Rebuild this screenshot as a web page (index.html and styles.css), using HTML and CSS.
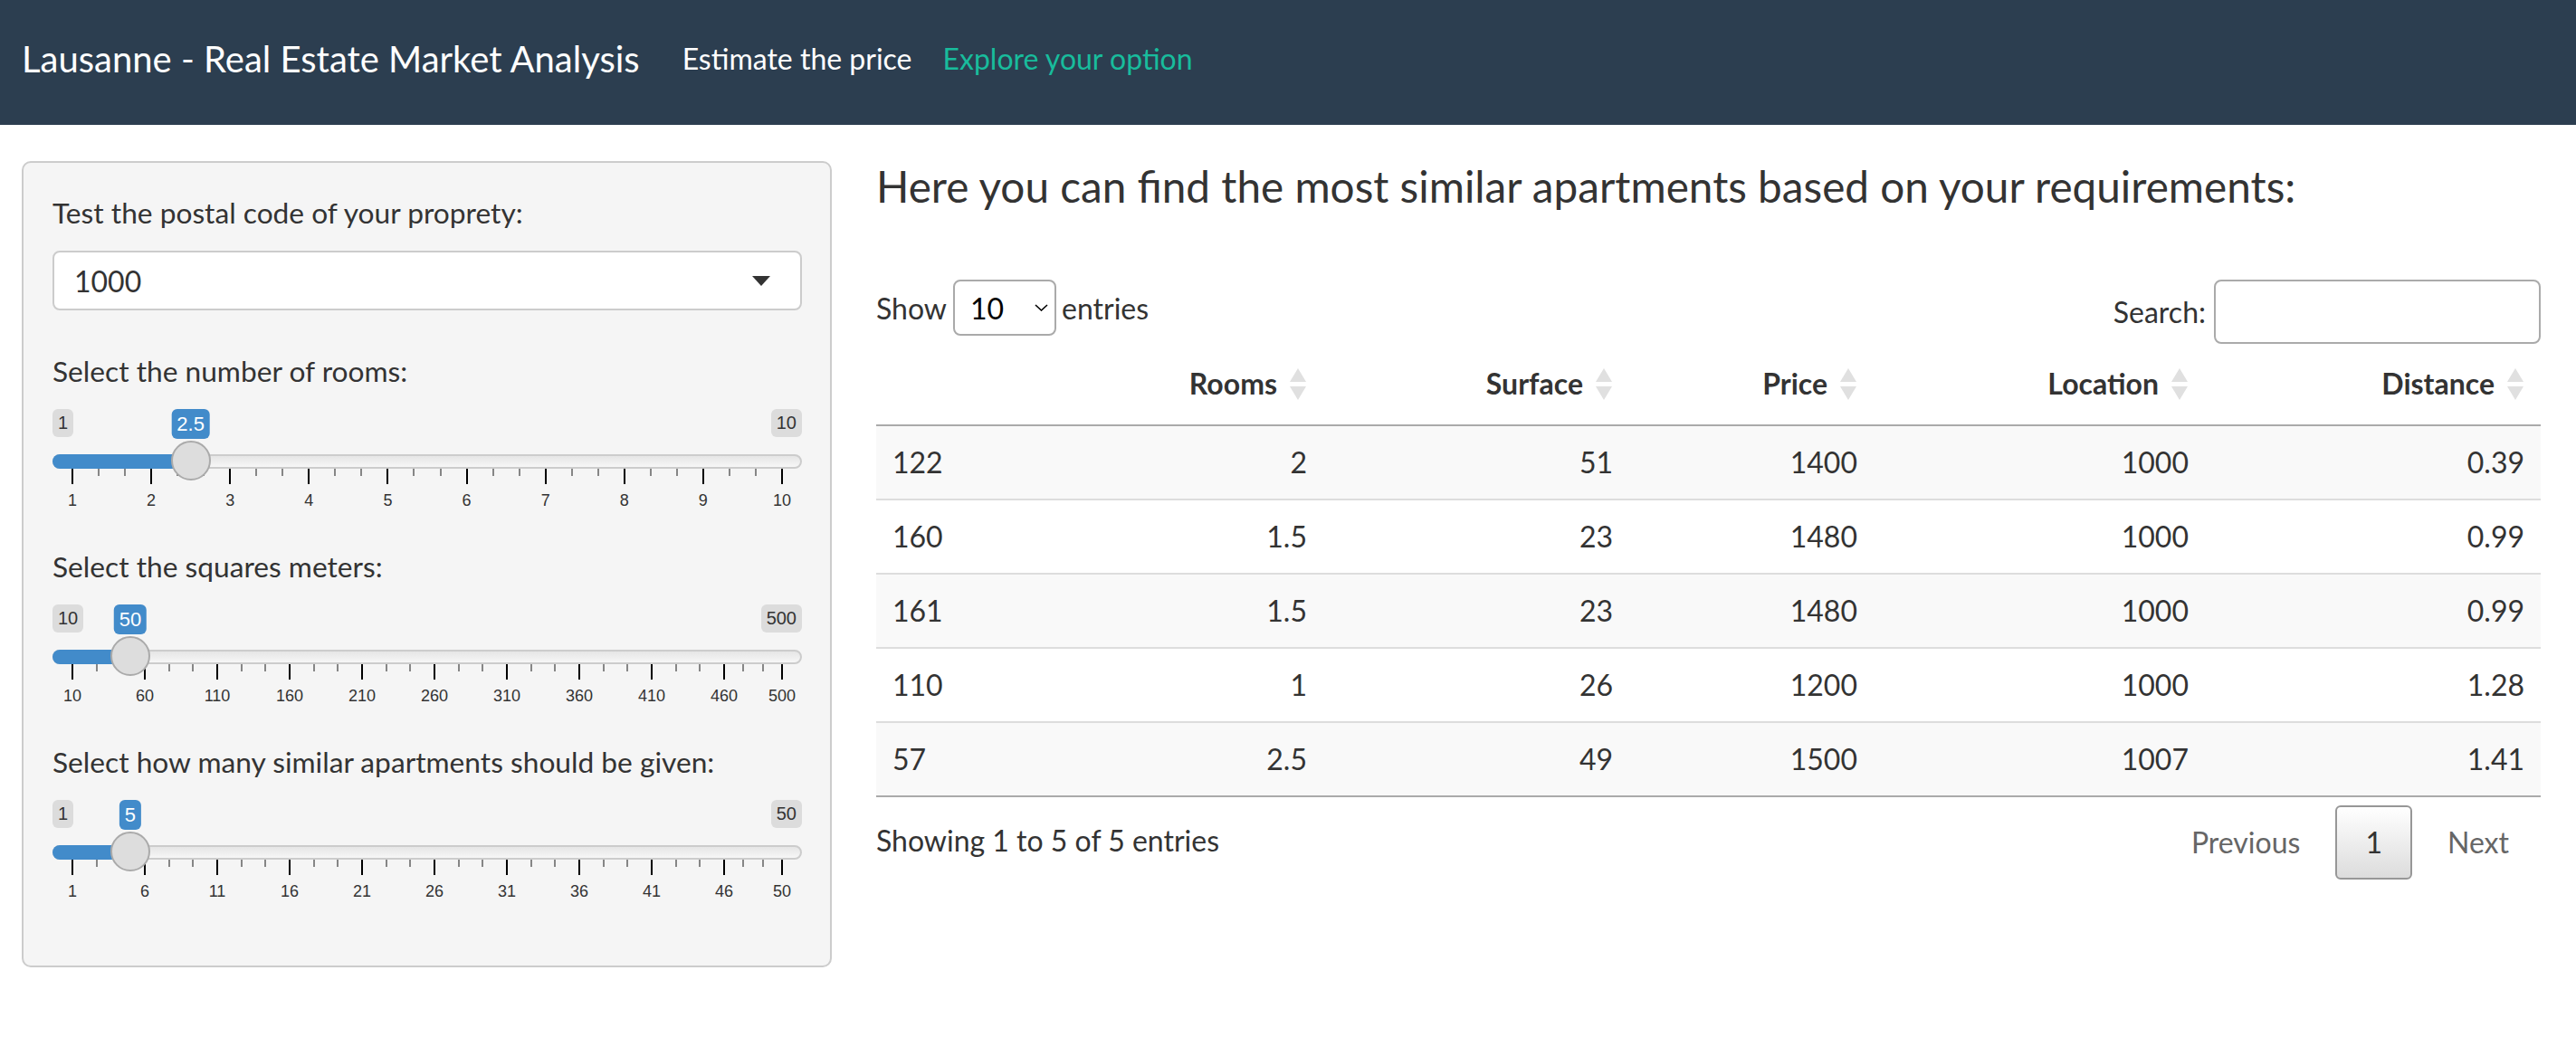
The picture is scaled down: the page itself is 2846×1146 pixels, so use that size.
FILE: index.html
```html
<!DOCTYPE html>
<html lang="en">
<head>
<meta charset="utf-8">
<title>Lausanne - Real Estate Market Analysis</title>
<link rel="stylesheet" href="styles.css">
</head>
<body>
<nav class="navbar">
  <span class="brand">Lausanne - Real Estate Market Analysis</span>
  <ul class="nav">
    <li>Estimate the price</li>
    <li class="active">Explore your option</li>
  </ul>
</nav>
<div class="page">
  <aside class="well">
    <label class="lbl">Test the postal code of your proprety:</label>
    <div class="selectize"><span>1000</span><span class="caret"></span></div>

    <label class="lbl">Select the number of rooms:</label>
    <div class="irs">
      <span class="irs-line"></span>
      <span class="irs-min">1</span>
      <span class="irs-max">10</span>
      <div class="irs-scale">
        <span class="pol" style="left:0%"></span>
        <span class="pol small" style="left:3.704%"></span>
        <span class="pol small" style="left:7.407%"></span>
        <span class="pol" style="left:11.111%"></span>
        <span class="pol small" style="left:14.815%"></span>
        <span class="pol small" style="left:18.519%"></span>
        <span class="pol" style="left:22.222%"></span>
        <span class="pol small" style="left:25.926%"></span>
        <span class="pol small" style="left:29.630%"></span>
        <span class="pol" style="left:33.333%"></span>
        <span class="pol small" style="left:37.037%"></span>
        <span class="pol small" style="left:40.741%"></span>
        <span class="pol" style="left:44.444%"></span>
        <span class="pol small" style="left:48.148%"></span>
        <span class="pol small" style="left:51.852%"></span>
        <span class="pol" style="left:55.556%"></span>
        <span class="pol small" style="left:59.259%"></span>
        <span class="pol small" style="left:62.963%"></span>
        <span class="pol" style="left:66.667%"></span>
        <span class="pol small" style="left:70.370%"></span>
        <span class="pol small" style="left:74.074%"></span>
        <span class="pol" style="left:77.778%"></span>
        <span class="pol small" style="left:81.481%"></span>
        <span class="pol small" style="left:85.185%"></span>
        <span class="pol" style="left:88.889%"></span>
        <span class="pol small" style="left:92.593%"></span>
        <span class="pol small" style="left:96.296%"></span>
        <span class="pol" style="left:100%"></span>
        <span class="gt" style="left:0%">1</span>
        <span class="gt" style="left:11.111%">2</span>
        <span class="gt" style="left:22.222%">3</span>
        <span class="gt" style="left:33.333%">4</span>
        <span class="gt" style="left:44.444%">5</span>
        <span class="gt" style="left:55.556%">6</span>
        <span class="gt" style="left:66.667%">7</span>
        <span class="gt" style="left:77.778%">8</span>
        <span class="gt" style="left:88.889%">9</span>
        <span class="gt" style="left:100%">10</span>
        <span class="irs-bar" style="width:calc(16.667% + 22px)"></span>
        <span class="irs-slider" style="left:16.667%"></span>
        <span class="irs-single" style="left:16.667%">2.5</span>
      </div>
    </div>

    <label class="lbl">Select the squares meters:</label>
    <div class="irs">
      <span class="irs-line"></span>
      <span class="irs-min">10</span>
      <span class="irs-max">500</span>
      <div class="irs-scale">
        <span class="pol" style="left:0%"></span>
        <span class="pol small" style="left:3.401%"></span>
        <span class="pol small" style="left:6.803%"></span>
        <span class="pol" style="left:10.204%"></span>
        <span class="pol small" style="left:13.605%"></span>
        <span class="pol small" style="left:17.007%"></span>
        <span class="pol" style="left:20.408%"></span>
        <span class="pol small" style="left:23.810%"></span>
        <span class="pol small" style="left:27.211%"></span>
        <span class="pol" style="left:30.612%"></span>
        <span class="pol small" style="left:34.014%"></span>
        <span class="pol small" style="left:37.415%"></span>
        <span class="pol" style="left:40.816%"></span>
        <span class="pol small" style="left:44.218%"></span>
        <span class="pol small" style="left:47.619%"></span>
        <span class="pol" style="left:51.020%"></span>
        <span class="pol small" style="left:54.422%"></span>
        <span class="pol small" style="left:57.823%"></span>
        <span class="pol" style="left:61.224%"></span>
        <span class="pol small" style="left:64.626%"></span>
        <span class="pol small" style="left:68.027%"></span>
        <span class="pol" style="left:71.429%"></span>
        <span class="pol small" style="left:74.830%"></span>
        <span class="pol small" style="left:78.231%"></span>
        <span class="pol" style="left:81.633%"></span>
        <span class="pol small" style="left:85.034%"></span>
        <span class="pol small" style="left:88.435%"></span>
        <span class="pol" style="left:91.837%"></span>
        <span class="pol small" style="left:94.558%"></span>
        <span class="pol small" style="left:97.279%"></span>
        <span class="pol" style="left:100%"></span>
        <span class="gt" style="left:0%">10</span>
        <span class="gt" style="left:10.204%">60</span>
        <span class="gt" style="left:20.408%">110</span>
        <span class="gt" style="left:30.612%">160</span>
        <span class="gt" style="left:40.816%">210</span>
        <span class="gt" style="left:51.020%">260</span>
        <span class="gt" style="left:61.224%">310</span>
        <span class="gt" style="left:71.429%">360</span>
        <span class="gt" style="left:81.633%">410</span>
        <span class="gt" style="left:91.837%">460</span>
        <span class="gt" style="left:100%">500</span>
        <span class="irs-bar" style="width:calc(8.163% + 22px)"></span>
        <span class="irs-slider" style="left:8.163%"></span>
        <span class="irs-single" style="left:8.163%">50</span>
      </div>
    </div>

    <label class="lbl">Select how many similar apartments should be given:</label>
    <div class="irs">
      <span class="irs-line"></span>
      <span class="irs-min">1</span>
      <span class="irs-max">50</span>
      <div class="irs-scale">
        <span class="pol" style="left:0%"></span>
        <span class="pol small" style="left:3.401%"></span>
        <span class="pol small" style="left:6.803%"></span>
        <span class="pol" style="left:10.204%"></span>
        <span class="pol small" style="left:13.605%"></span>
        <span class="pol small" style="left:17.007%"></span>
        <span class="pol" style="left:20.408%"></span>
        <span class="pol small" style="left:23.810%"></span>
        <span class="pol small" style="left:27.211%"></span>
        <span class="pol" style="left:30.612%"></span>
        <span class="pol small" style="left:34.014%"></span>
        <span class="pol small" style="left:37.415%"></span>
        <span class="pol" style="left:40.816%"></span>
        <span class="pol small" style="left:44.218%"></span>
        <span class="pol small" style="left:47.619%"></span>
        <span class="pol" style="left:51.020%"></span>
        <span class="pol small" style="left:54.422%"></span>
        <span class="pol small" style="left:57.823%"></span>
        <span class="pol" style="left:61.224%"></span>
        <span class="pol small" style="left:64.626%"></span>
        <span class="pol small" style="left:68.027%"></span>
        <span class="pol" style="left:71.429%"></span>
        <span class="pol small" style="left:74.830%"></span>
        <span class="pol small" style="left:78.231%"></span>
        <span class="pol" style="left:81.633%"></span>
        <span class="pol small" style="left:85.034%"></span>
        <span class="pol small" style="left:88.435%"></span>
        <span class="pol" style="left:91.837%"></span>
        <span class="pol small" style="left:94.558%"></span>
        <span class="pol small" style="left:97.279%"></span>
        <span class="pol" style="left:100%"></span>
        <span class="gt" style="left:0%">1</span>
        <span class="gt" style="left:10.204%">6</span>
        <span class="gt" style="left:20.408%">11</span>
        <span class="gt" style="left:30.612%">16</span>
        <span class="gt" style="left:40.816%">21</span>
        <span class="gt" style="left:51.020%">26</span>
        <span class="gt" style="left:61.224%">31</span>
        <span class="gt" style="left:71.429%">36</span>
        <span class="gt" style="left:81.633%">41</span>
        <span class="gt" style="left:91.837%">46</span>
        <span class="gt" style="left:100%">50</span>
        <span class="irs-bar" style="width:calc(8.163% + 22px)"></span>
        <span class="irs-slider" style="left:8.163%"></span>
        <span class="irs-single" style="left:8.163%">5</span>
      </div>
    </div>
  </aside>

  <main class="main">
    <h3 class="title">Here you can find the most similar apartments based on your requirements:</h3>
    <div class="dt-top">
      <div class="len">Show
        <div class="sel"><span>10</span>
          <svg class="chev" width="15" height="8" viewBox="0 0 15 8"><polyline points="1,1 7.5,7 14,1" fill="none" stroke="#000" stroke-width="1.6"/></svg>
        </div>entries</div>
      <div class="filt">Search:<div class="search"></div></div>
    </div>
    <table class="dt">
      <colgroup>
        <col style="width:182px"><col style="width:312px"><col style="width:338px"><col style="width:270px"><col style="width:366px"><col style="width:371px">
      </colgroup>
      <thead>
        <tr>
          <th></th>
          <th>Rooms<svg class="sort" width="18" height="35" viewBox="0 0 18 35"><polygon points="9,0 18,15 0,15"/><polygon points="0,20 18,20 9,35"/></svg></th>
          <th>Surface<svg class="sort" width="18" height="35" viewBox="0 0 18 35"><polygon points="9,0 18,15 0,15"/><polygon points="0,20 18,20 9,35"/></svg></th>
          <th>Price<svg class="sort" width="18" height="35" viewBox="0 0 18 35"><polygon points="9,0 18,15 0,15"/><polygon points="0,20 18,20 9,35"/></svg></th>
          <th>Location<svg class="sort" width="18" height="35" viewBox="0 0 18 35"><polygon points="9,0 18,15 0,15"/><polygon points="0,20 18,20 9,35"/></svg></th>
          <th>Distance<svg class="sort" width="18" height="35" viewBox="0 0 18 35"><polygon points="9,0 18,15 0,15"/><polygon points="0,20 18,20 9,35"/></svg></th>
        </tr>
      </thead>
      <tbody>
        <tr><td>122</td><td>2</td><td>51</td><td>1400</td><td>1000</td><td>0.39</td></tr>
        <tr><td>160</td><td>1.5</td><td>23</td><td>1480</td><td>1000</td><td>0.99</td></tr>
        <tr><td>161</td><td>1.5</td><td>23</td><td>1480</td><td>1000</td><td>0.99</td></tr>
        <tr><td>110</td><td>1</td><td>26</td><td>1200</td><td>1000</td><td>1.28</td></tr>
        <tr><td>57</td><td>2.5</td><td>49</td><td>1500</td><td>1007</td><td>1.41</td></tr>
      </tbody>
    </table>
    <div class="dt-bottom">
      <div class="info">Showing 1 to 5 of 5 entries</div>
      <div class="paginate">
        <span class="pb">Previous</span>
        <span class="pb current">1</span>
        <span class="pb">Next</span>
      </div>
    </div>
  </main>
</div>
</body>
</html>
```

FILE: styles.css
```css
* { box-sizing: border-box; }
body { margin: 0; font-family: Lato, "Noto Sans", sans-serif; color: #333; background: #fff; }

.navbar { height: 138px; background: #2c3e50; display: flex; align-items: center; padding: 0 0 9px 24px; }
.brand { font-size: 40px; line-height: 48px; color: #fff; margin-right: 30px; white-space: nowrap; }
.nav { display: flex; list-style: none; margin: 0; padding: 0; }
.nav li { font-size: 32px; line-height: 38px; color: #fff; padding: 0 17px; white-space: nowrap; }
.nav li.active { color: #18bc9c; }

.page { display: flex; align-items: flex-start; gap: 49px; padding: 40px 39px 0 24px; }

.well { flex: none; width: 895px; background: #f5f5f5; border: 2px solid #ccc; border-radius: 10px; padding: 36px 31px 28px 32px; }
.lbl { display: block; font-size: 31.7px; line-height: 38px; margin-bottom: 23px; white-space: nowrap; }
.selectize { height: 66px; background: #fff; border: 2px solid #ccc; border-radius: 8px; display: flex; align-items: center; justify-content: space-between; padding: 0 33px 0 22px; font-size: 32px; margin-bottom: 48px; }
.caret { width: 0; height: 0; border-left: 10px solid transparent; border-right: 10px solid transparent; border-top: 11px solid #333; }

.irs { position: relative; height: 155px; font-family: "Liberation Sans", Arial, sans-serif; }
.irs-line { position: absolute; left: 0; right: 0; top: 50px; height: 16px; border: 2px solid #ccc; border-radius: 16px; background: linear-gradient(to bottom, #ddd -50%, #fff 150%); }
.irs-min, .irs-max { position: absolute; top: 0; font-size: 20px; line-height: 27px; padding: 2px 6px; background: rgba(0, 0, 0, 0.1); border-radius: 6px; color: #333; }
.irs-min { left: 0; }
.irs-max { right: 0; }
.irs-scale { position: absolute; left: 22px; right: 22px; top: 0; bottom: 0; }
.irs-bar { position: absolute; left: -22px; top: 50px; height: 16px; background: #428bca; border-radius: 16px 0 0 16px; }
.irs-slider { position: absolute; top: 35px; width: 44px; height: 44px; margin-left: -22px; border: 2px solid #aaa; background: #ddd; border-radius: 50%; }
.irs-single { position: absolute; top: 0; transform: translateX(-50%); font-size: 22px; line-height: 29px; padding: 2px 6px; background: #428bca; color: #fff; border-radius: 6px; white-space: nowrap; }
.pol { position: absolute; top: 66px; width: 2px; height: 17px; margin-left: -1px; background: #000; }
.pol.small { height: 8px; background: rgba(0, 0, 0, 0.45); }
.gt { position: absolute; top: 91px; font-size: 18px; line-height: 20px; transform: translateX(-50%); color: #333; white-space: nowrap; }

.main { flex: 1; min-width: 0; }
.title { font-size: 47.7px; line-height: 51px; font-weight: 400; margin: 2px 0 0; white-space: nowrap; }

.dt-top { display: flex; justify-content: space-between; align-items: flex-start; margin-top: 78px; font-size: 32px; }
.len, .filt { display: flex; align-items: center; white-space: nowrap; }
.sel { width: 114px; height: 62px; border: 2px solid #aaa; border-radius: 8px; margin: 0 6px 0 7px; display: flex; align-items: center; justify-content: space-between; padding: 0 7px 0 17px; color: #000; background: #fff; }
.search { width: 361px; height: 71px; border: 2px solid #aaa; border-radius: 8px; margin-left: 9px; background: #fff; }

.dt { width: 100%; border-collapse: separate; border-spacing: 0; table-layout: fixed; margin-top: 9px; font-size: 32px; }
.dt th { font-weight: 700; text-align: right; padding: 16px 19px 26px 18px; line-height: 38px; border-bottom: 2px solid #aaa; white-space: nowrap; }
.dt td { padding: 20px 18px; line-height: 40px; text-align: right; }
.dt td:first-child { text-align: left; }
.dt tbody tr + tr td { border-top: 2px solid #ddd; }
.dt tbody tr:nth-child(odd) { background: #f9f9f9; }
.dt tbody tr:last-child td { border-bottom: 2px solid #aaa; }
.sort { display: inline-block; margin-left: 14px; vertical-align: -6px; fill: #e0e0e0; }

.dt-bottom { display: flex; justify-content: space-between; align-items: flex-start; margin-top: 1px; font-size: 32px; }
.info { padding-top: 24px; line-height: 46px; }
.paginate { display: flex; padding-top: 8px; }
.pb { padding: 16px 33px; border: 2px solid transparent; line-height: 46px; margin-left: 4px; color: #666; border-radius: 6px; }
.pb.current { padding: 16px 31px; border-color: #979797; background: linear-gradient(to bottom, #fff 0%, #dcdcdc 100%); color: #333; }
```
